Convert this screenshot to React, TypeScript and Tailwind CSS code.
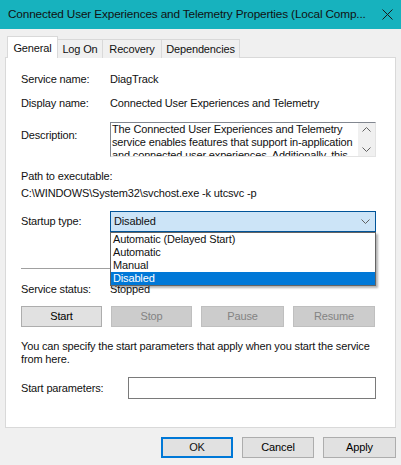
import React from 'react';

const font = { fontFamily: '"Liberation Sans", Arial, sans-serif' };

const Chevron = ({ up = false, className = '' }: { up?: boolean; className?: string }) => (
  <svg width="9" height="5" viewBox="0 0 9 5" className={className}>
    <path
      d={up ? 'M0.5 4.5 L4.5 0.5 L8.5 4.5' : 'M0.5 0.5 L4.5 4.5 L8.5 0.5'}
      fill="none"
      stroke="#606060"
      strokeWidth="1"
    />
  </svg>
);

const Btn = ({ label, disabled = false, width = 'w-[81px]' }: { label: string; disabled?: boolean; width?: string }) => (
  <div
    className={`${width} h-[21px] flex items-center justify-center border ${
      disabled ? 'bg-[#cccccc] border-[#bfbfbf] text-[#838383]' : 'bg-[#e1e1e1] border-[#adadad] text-black'
    }`}
  >
    {label}
  </div>
);

const App = () => {
  return (
    <div
      className="w-[401px] h-[465px] bg-[#f0f0f0] flex flex-col text-[11px] tracking-[-0.15px] text-[#111] overflow-hidden"
      style={font}
    >
      {/* title bar */}
      <div className="h-[29px] bg-[#17b2be] flex items-center pl-[8px] pr-[7px]">
        <span className="flex-1 text-[11.8px] whitespace-nowrap">Connected User Experiences and Telemetry Properties (Local Comp...</span>
        <svg width="11" height="11" viewBox="0 0 11 11" className="mr-[1px]">
          <path d="M0.5 0.5 L10.5 10.5 M10.5 0.5 L0.5 10.5" stroke="#1a1a1a" strokeWidth="1" />
        </svg>
      </div>

      {/* tabs */}
      <div className="flex items-end h-[29px] pl-[7px] relative z-10">
        <div className="w-[51px] h-[22px] bg-white border border-[#d9d9d9] border-b-0 flex items-start justify-center pt-[3px]">General</div>
        <div className="w-[45px] h-[19px] bg-[#f0f0f0] border border-[#d9d9d9] border-l-0 border-b-0 flex items-center justify-center">Log On</div>
        <div className="w-[59px] h-[19px] bg-[#f0f0f0] border border-[#d9d9d9] border-l-0 border-b-0 flex items-center justify-center">Recovery</div>
        <div className="w-[78px] h-[19px] bg-[#f0f0f0] border border-[#d9d9d9] border-l-0 border-b-0 flex items-center justify-center">Dependencies</div>
      </div>

      {/* panel */}
      <div className="relative mx-[5px] -mt-px h-[371px] bg-white border border-[#d9d9d9] pl-[15px] pr-[19px] pt-[13px]">
        <div className="flex h-[16px] items-center">
          <span className="w-[89px]">Service name:</span>
          <span>DiagTrack</span>
        </div>
        <div className="flex h-[16px] items-center mt-[8px]">
          <span className="w-[89px]">Display name:</span>
          <span>Connected User Experiences and Telemetry</span>
        </div>
        <div className="flex mt-[11px]">
          <span className="w-[89px] mt-[5px]">Description:</span>
          <div className="flex-1 h-[35px] border border-[#828790] border-r-[#e3e3e3] border-b-[#e3e3e3] flex overflow-hidden">
            <div className="flex-1 pl-[1px] leading-[13px] overflow-hidden">
              The Connected User Experiences and Telemetry service enables features that support in-application and connected user experiences. Additionally, this
            </div>
            <div className="w-[17px] bg-[#f0f0f0] flex flex-col items-center justify-between py-[4px]">
              <Chevron up />
              <Chevron />
            </div>
          </div>
        </div>
        <div className="h-[16px] flex items-center mt-[11px]">Path to executable:</div>
        <div className="h-[16px] flex items-center mt-[1px]">C:\WINDOWS\System32\svchost.exe -k utcsvc -p</div>

        <div className="flex items-center mt-[10px] relative">
          <span className="w-[89px]">Startup type:</span>
          <div className="flex-1 h-[21px] bg-[#cce4f7] border border-[#005499] flex items-center pl-[3px] pr-[5px]">
            <span className="flex-1">Disabled</span>
            <Chevron />
          </div>
          {/* open list */}
          <div className="absolute left-[89px] right-0 top-[21px] bg-white border border-[#646464] shadow-[2px_2px_2px_rgba(0,0,0,0.3)] z-10 leading-[13px]">
            <div className="pl-[2px] h-[13px]">Automatic (Delayed Start)</div>
            <div className="pl-[2px] h-[13px]">Automatic</div>
            <div className="pl-[2px] h-[13px]">Manual</div>
            <div className="pl-[2px] h-[13px] bg-[#0078d7] text-white">Disabled</div>
          </div>
        </div>

        <div className="h-px bg-[#a0a0a0] mt-[36px]" />

        <div className="flex h-[16px] items-center mt-[12px]">
          <span className="w-[89px]">Service status:</span>
          <span>Stopped</span>
        </div>

        <div className="flex gap-[9px] mt-[9px]">
          <Btn label="Start" />
          <Btn label="Stop" disabled />
          <Btn label="Pause" disabled width="w-[83px]" />
          <Btn label="Resume" disabled width="w-[82px]" />
        </div>

        <div className="mt-[13px] leading-[13px] pr-[3px]">
          You can specify the start parameters that apply when you start the service from here.
        </div>

        <div className="flex items-center mt-[11px]">
          <span className="w-[107px]">Start parameters:</span>
          <div className="flex-1 h-[22px] bg-white border border-[#7a7a7a]" />
        </div>
      </div>

      {/* dialog buttons */}
      <div className="flex justify-end gap-[9px] mt-[9px] pr-[5px]">
        <div className="w-[72px] h-[21px] flex items-center justify-center bg-[#e1e1e1] border-2 border-[#0078d7]">OK</div>
        <Btn label="Cancel" width="w-[72px]" />
        <Btn label="Apply" width="w-[73px]" />
      </div>
    </div>
  );
};

export default App;
